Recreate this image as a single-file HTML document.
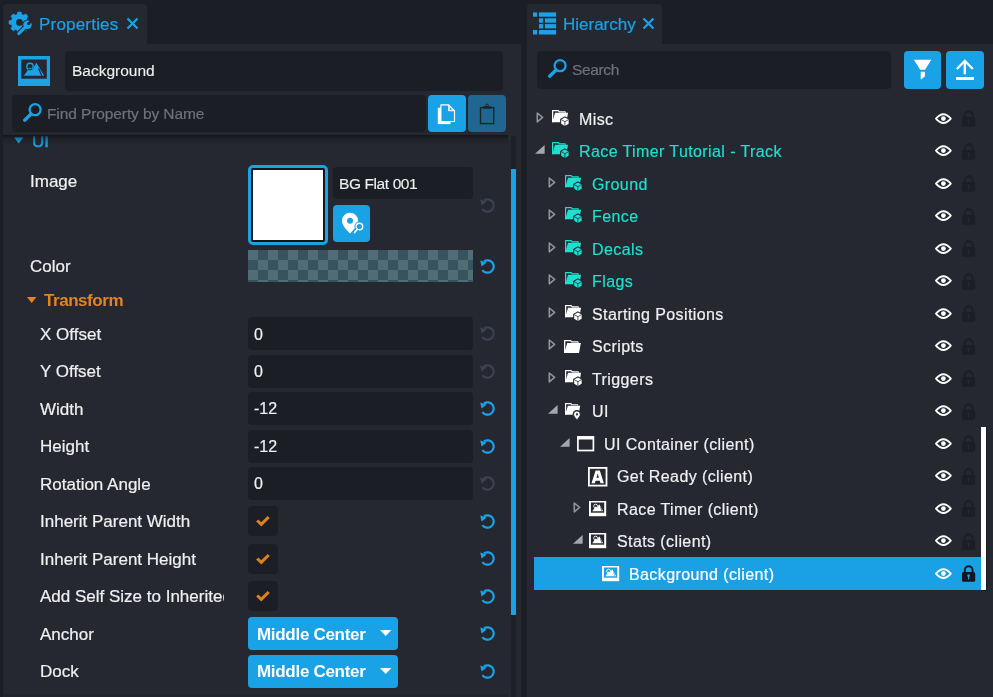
<!DOCTYPE html>
<html><head><meta charset="utf-8">
<style>
*{box-sizing:border-box;margin:0;padding:0}
html,body{width:993px;height:697px;overflow:hidden;background:#1c1e26;font-family:"Liberation Sans",sans-serif;color:#f0f0f0}
.a{position:absolute;display:block;overflow:visible}
.t{position:absolute;white-space:nowrap;will-change:transform}
</style></head><body>
<div class="a" style="left:3px;top:4px;width:144px;height:41px;background:#262831;border-radius:4px 4px 0 0;"></div>
<div class="a" style="left:3px;top:44px;width:518px;height:653px;background:#262831;"></div>
<svg class="a" style="left:0.00px;top:0.00px;" width="40" height="44" viewBox="0 0 40 44"><circle cx="19.45" cy="22.4" r="8.4" fill="#1aa2e6"/><path d="M17.05 14.799999999999999 L17.9 11.999999999999998 H21.0 L21.849999999999998 14.799999999999999 Z" fill="#1aa2e6" stroke="#1aa2e6" stroke-width="0.6" stroke-linejoin="round" transform="rotate(0 19.45 22.4)"/><path d="M17.05 14.799999999999999 L17.9 11.999999999999998 H21.0 L21.849999999999998 14.799999999999999 Z" fill="#1aa2e6" stroke="#1aa2e6" stroke-width="0.6" stroke-linejoin="round" transform="rotate(45 19.45 22.4)"/><path d="M17.05 14.799999999999999 L17.9 11.999999999999998 H21.0 L21.849999999999998 14.799999999999999 Z" fill="#1aa2e6" stroke="#1aa2e6" stroke-width="0.6" stroke-linejoin="round" transform="rotate(90 19.45 22.4)"/><path d="M17.05 14.799999999999999 L17.9 11.999999999999998 H21.0 L21.849999999999998 14.799999999999999 Z" fill="#1aa2e6" stroke="#1aa2e6" stroke-width="0.6" stroke-linejoin="round" transform="rotate(135 19.45 22.4)"/><path d="M17.05 14.799999999999999 L17.9 11.999999999999998 H21.0 L21.849999999999998 14.799999999999999 Z" fill="#1aa2e6" stroke="#1aa2e6" stroke-width="0.6" stroke-linejoin="round" transform="rotate(180 19.45 22.4)"/><path d="M17.05 14.799999999999999 L17.9 11.999999999999998 H21.0 L21.849999999999998 14.799999999999999 Z" fill="#1aa2e6" stroke="#1aa2e6" stroke-width="0.6" stroke-linejoin="round" transform="rotate(225 19.45 22.4)"/><path d="M17.05 14.799999999999999 L17.9 11.999999999999998 H21.0 L21.849999999999998 14.799999999999999 Z" fill="#1aa2e6" stroke="#1aa2e6" stroke-width="0.6" stroke-linejoin="round" transform="rotate(270 19.45 22.4)"/><path d="M17.05 14.799999999999999 L17.9 11.999999999999998 H21.0 L21.849999999999998 14.799999999999999 Z" fill="#1aa2e6" stroke="#1aa2e6" stroke-width="0.6" stroke-linejoin="round" transform="rotate(315 19.45 22.4)"/><circle cx="19.45" cy="22.4" r="3.35" fill="#262831"/><path d="M18.9 33.5 L27.5 24.8" stroke="#262831" stroke-width="5.2" stroke-linecap="round"/><circle cx="27.5" cy="24.8" r="5.3" fill="#262831"/><path d="M18.9 33.5 L27.5 24.8" stroke="#1aa2e6" stroke-width="3.2" stroke-linecap="round"/><circle cx="27.5" cy="24.8" r="4.2" fill="#1aa2e6"/><path d="M29.38 24.68 L27.62 22.92 L31.86 18.67 L33.63 20.44 Z" fill="#262831"/><circle cx="28.5" cy="23.8" r="1.45" fill="#262831"/></svg>
<div class="t" style="left:39.30px;top:14.00px;font-size:17px;line-height:21px;color:#1aa2e6;letter-spacing:0.2px;-webkit-text-stroke:0.2px #1aa2e6;">Properties</div>
<svg class="a" style="left:126.00px;top:17.00px;" width="13" height="13" viewBox="0 0 13 13"><path d="M1.5 1.5L11.5 11.5M11.5 1.5L1.5 11.5" stroke="#1aa2e6" stroke-width="2.2"/></svg>
<svg class="a" style="left:18.00px;top:56.00px;" width="32" height="30" viewBox="0 0 32 30"><defs><clipPath id="mt"><path d="M5.8 19.8 L12 11.3 L14.3 13.8 L18.4 6.8 L26.2 19.8 Z"/></clipPath></defs><rect x="0" y="0" width="32" height="30" fill="#1aa2e6"/><rect x="3.2" y="3.5" width="25.6" height="19.2" fill="#262831"/><circle cx="12" cy="10.4" r="3.2" fill="none" stroke="#1aa2e6" stroke-width="1.4"/><path d="M5.8 19.8 L12 11.3 L14.3 13.8 L18.4 6.8 L26.2 19.8 Z" fill="#1aa2e6"/><circle cx="12" cy="10.4" r="3.2" fill="none" stroke="#262831" stroke-width="1.2" clip-path="url(#mt)"/><path d="M20.6 12.4 L23.9 19.9" stroke="#262831" stroke-width="1.2"/></svg>
<div class="a" style="left:65px;top:51px;width:438px;height:40px;background:#1c1e26;border-radius:4px;"></div>
<div class="t" style="left:72.00px;top:61.00px;font-size:15.5px;line-height:19px;color:#f0f0f0;-webkit-text-stroke:0.12px #f0f0f0;">Background</div>
<div class="a" style="left:12px;top:95px;width:414px;height:37px;background:#1c1e26;border-radius:4px;"></div>
<svg class="a" style="left:20.00px;top:100.00px;" width="25" height="25" viewBox="0 0 25 25"><circle cx="15.1" cy="9.7" r="5.5" fill="none" stroke="#1aa2e6" stroke-width="2.3"/><path d="M10.8 14.2 L4.6 20.2" stroke="#1aa2e6" stroke-width="3.3" stroke-linecap="round"/></svg>
<div class="t" style="left:46.80px;top:104.00px;font-size:15.5px;line-height:19px;color:#6f7279;letter-spacing:-0.1px;-webkit-text-stroke:0.2px #6f7279;">Find Property by Name</div>
<div class="a" style="left:428px;top:95px;width:38px;height:37px;background:#1aa2e6;border-radius:4px;"></div>
<svg class="a" style="left:437.00px;top:103.00px;" width="20" height="22" viewBox="0 0 20 22"><path d="M0.8 4.8 H13.5 V21.1 H0.8 Z" fill="#fff"/><path d="M3.9 1.9 H11.6 L17.5 7.8 V18.5 H3.9 Z" fill="#1aa2e6" stroke="#fff" stroke-width="1.15" stroke-linejoin="round"/><path d="M11.6 1.9 V7.8 H17.5 Z" fill="#fff" stroke="#fff" stroke-width="0.8" stroke-linejoin="round"/><path d="M12.6 4 V6.8 H15.4 Z" fill="#1aa2e6"/></svg>
<div class="a" style="left:468px;top:95px;width:38px;height:37px;background:#1f6790;border-radius:4px;"></div>
<svg class="a" style="left:479.00px;top:103.00px;" width="16" height="22" viewBox="0 0 16 22"><rect x="1.5" y="4.6" width="13.2" height="16.0" fill="none" stroke="#1b232b" stroke-width="1.4"/><rect x="4" y="3.2" width="8.2" height="2.6" rx="1" fill="#1b232b"/><circle cx="8.1" cy="2.4" r="1.3" fill="none" stroke="#1b232b" stroke-width="1"/></svg>
<svg class="a" style="left:14.00px;top:136.50px;" width="10" height="7" viewBox="0 0 10 7"><path d="M0 0.3 H9.4 L4.7 6.5Z" fill="#1aa2e6"/></svg>
<div class="t" style="left:32.30px;top:131.00px;font-size:17px;line-height:21px;color:#1aa2e6;-webkit-text-stroke:0.5px #1aa2e6;clip-path:inset(5px 0 0 0);">UI</div>
<div class="t" style="left:29.80px;top:171.00px;font-size:17px;line-height:21px;color:#f0f0f0;-webkit-text-stroke:0.2px #f0f0f0;">Image</div>
<div class="t" style="left:30.20px;top:256.00px;font-size:17px;line-height:21px;color:#f0f0f0;-webkit-text-stroke:0.2px #f0f0f0;">Color</div>
<svg class="a" style="left:26.50px;top:296.50px;" width="10" height="6.5" viewBox="0 0 10 6.5"><path d="M0 0 H9.4 L4.7 6Z" fill="#e5831e"/></svg>
<div class="t" style="left:44.00px;top:290.00px;font-size:17px;line-height:21px;color:#e5831e;font-weight:bold;letter-spacing:-0.45px;">Transform</div>
<div class="t" style="left:40.10px;top:324.00px;font-size:17px;line-height:21px;color:#f0f0f0;-webkit-text-stroke:0.2px #f0f0f0;">X Offset</div>
<div class="t" style="left:40.10px;top:361.46px;font-size:17px;line-height:21px;color:#f0f0f0;-webkit-text-stroke:0.2px #f0f0f0;">Y Offset</div>
<div class="t" style="left:40.10px;top:398.92px;font-size:17px;line-height:21px;color:#f0f0f0;-webkit-text-stroke:0.2px #f0f0f0;">Width</div>
<div class="t" style="left:40.10px;top:436.38px;font-size:17px;line-height:21px;color:#f0f0f0;-webkit-text-stroke:0.2px #f0f0f0;">Height</div>
<div class="t" style="left:40.10px;top:473.84px;font-size:17px;line-height:21px;color:#f0f0f0;-webkit-text-stroke:0.2px #f0f0f0;">Rotation Angle</div>
<div class="t" style="left:40.10px;top:511.30px;font-size:17px;line-height:21px;color:#f0f0f0;-webkit-text-stroke:0.2px #f0f0f0;">Inherit Parent Width</div>
<div class="t" style="left:40.10px;top:548.76px;font-size:17px;line-height:21px;color:#f0f0f0;-webkit-text-stroke:0.2px #f0f0f0;">Inherit Parent Height</div>
<div class="t" style="left:40.10px;top:586.22px;font-size:17px;line-height:21px;color:#f0f0f0;-webkit-text-stroke:0.2px #f0f0f0;width:184px;overflow:hidden;">Add Self Size to Inherited Size</div>
<div class="t" style="left:40.10px;top:623.68px;font-size:17px;line-height:21px;color:#f0f0f0;-webkit-text-stroke:0.2px #f0f0f0;">Anchor</div>
<div class="t" style="left:40.10px;top:661.14px;font-size:17px;line-height:21px;color:#f0f0f0;-webkit-text-stroke:0.2px #f0f0f0;">Dock</div>
<div class="a" style="left:248px;top:165px;width:80px;height:80px;background:#1aa2e6;border-radius:5px;"></div>
<div class="a" style="left:250.5px;top:167.5px;width:74px;height:74px;background:#15151a;border-radius:2px;"></div>
<div class="a" style="left:252.5px;top:169.5px;width:70px;height:70px;background:#ffffff;"></div>
<div class="a" style="left:333px;top:167px;width:140px;height:32px;background:#1c1e26;border-radius:4px;"></div>
<div class="t" style="left:339.30px;top:174.00px;font-size:15.5px;line-height:19px;color:#f0f0f0;letter-spacing:-0.4px;-webkit-text-stroke:0.12px #f0f0f0;">BG Flat 001</div>
<div class="a" style="left:333px;top:205px;width:37px;height:37px;background:#1aa2e6;border-radius:4px;"></div>
<svg class="a" style="left:340.00px;top:212.00px;" width="25" height="23" viewBox="0 0 25 23"><path d="M10 21.6 C6.2 17.2 2 13.6 2 8.7 A8 8 0 0 1 18 8.7 C18 13.6 13.8 17.2 10 21.6Z" fill="#fff"/><circle cx="10" cy="8.7" r="3" fill="#1aa2e6"/><circle cx="19.4" cy="14.5" r="5" fill="#1aa2e6"/><circle cx="19.4" cy="14.5" r="3.3" fill="none" stroke="#fff" stroke-width="1.4"/><path d="M17.3 17.2 L14.2 21" stroke="#1aa2e6" stroke-width="3.6"/><path d="M17.2 17.2 L14.6 20.6" stroke="#fff" stroke-width="1.7" stroke-linecap="round"/></svg>
<div class="a" style="left:248px;top:250px;width:225px;height:32px;background-color:#506c76;background-image:linear-gradient(45deg,#37535d 25%,transparent 25%,transparent 75%,#37535d 75%),linear-gradient(45deg,#37535d 25%,transparent 25%,transparent 75%,#37535d 75%);background-size:20px 20px;background-position:0 0,10px 10px"></div>
<div class="a" style="left:248px;top:317.0px;width:225px;height:33px;background:#1c1e26;border-radius:4px;"></div>
<div class="t" style="left:254.20px;top:324.50px;font-size:16px;line-height:20px;color:#f0f0f0;-webkit-text-stroke:0.2px #f0f0f0;">0</div>
<div class="a" style="left:248px;top:354.5px;width:225px;height:33px;background:#1c1e26;border-radius:4px;"></div>
<div class="t" style="left:254.20px;top:361.96px;font-size:16px;line-height:20px;color:#f0f0f0;-webkit-text-stroke:0.2px #f0f0f0;">0</div>
<div class="a" style="left:248px;top:392.0px;width:225px;height:33px;background:#1c1e26;border-radius:4px;"></div>
<div class="t" style="left:254.20px;top:399.42px;font-size:16px;line-height:20px;color:#f0f0f0;-webkit-text-stroke:0.2px #f0f0f0;">-12</div>
<div class="a" style="left:248px;top:429.5px;width:225px;height:33px;background:#1c1e26;border-radius:4px;"></div>
<div class="t" style="left:254.20px;top:436.88px;font-size:16px;line-height:20px;color:#f0f0f0;-webkit-text-stroke:0.2px #f0f0f0;">-12</div>
<div class="a" style="left:248px;top:467.0px;width:225px;height:33px;background:#1c1e26;border-radius:4px;"></div>
<div class="t" style="left:254.20px;top:474.34px;font-size:16px;line-height:20px;color:#f0f0f0;-webkit-text-stroke:0.2px #f0f0f0;">0</div>
<div class="a" style="left:248px;top:506.0px;width:30px;height:30px;background:#1c1e26;border-radius:4px;"></div>
<svg class="a" style="left:255.00px;top:514.00px;" width="16" height="14" viewBox="0 0 16 14"><path d="M2.2 6.5 L6.3 10.4 L13.7 3" fill="none" stroke="#da821c" stroke-width="3.1"/></svg>
<div class="a" style="left:248px;top:543.5px;width:30px;height:30px;background:#1c1e26;border-radius:4px;"></div>
<svg class="a" style="left:255.00px;top:551.50px;" width="16" height="14" viewBox="0 0 16 14"><path d="M2.2 6.5 L6.3 10.4 L13.7 3" fill="none" stroke="#da821c" stroke-width="3.1"/></svg>
<div class="a" style="left:248px;top:581.0px;width:30px;height:30px;background:#1c1e26;border-radius:4px;"></div>
<svg class="a" style="left:255.00px;top:589.00px;" width="16" height="14" viewBox="0 0 16 14"><path d="M2.2 6.5 L6.3 10.4 L13.7 3" fill="none" stroke="#da821c" stroke-width="3.1"/></svg>
<div class="a" style="left:248px;top:617.0px;width:150px;height:33px;background:#1aa2e6;border-radius:4px;"></div>
<div class="t" style="left:256.80px;top:624.00px;font-size:17px;line-height:21px;color:#ffffff;font-weight:bold;letter-spacing:-0.3px;">Middle Center</div>
<svg class="a" style="left:379.50px;top:630.20px;" width="12" height="6.5" viewBox="0 0 12 6.5"><path d="M0 0 H11.4 L5.7 6Z" fill="#fff"/></svg>
<div class="a" style="left:248px;top:654.6px;width:150px;height:33px;background:#1aa2e6;border-radius:4px;"></div>
<div class="t" style="left:256.80px;top:661.46px;font-size:17px;line-height:21px;color:#ffffff;font-weight:bold;letter-spacing:-0.3px;">Middle Center</div>
<svg class="a" style="left:379.50px;top:667.80px;" width="12" height="6.5" viewBox="0 0 12 6.5"><path d="M0 0 H11.4 L5.7 6Z" fill="#fff"/></svg>
<svg class="a" style="left:479.70px;top:197.50px;" width="16" height="16" viewBox="0 0 16 16"><path d="M3.94 2.42 A6.2 6.2 0 1 1 2.42 11.06" fill="none" stroke="#3b4252" stroke-width="2.2"/><path d="M0.2 1.6 L1.6 7.6 L6.6 3.4Z" fill="#3b4252"/></svg>
<svg class="a" style="left:479.70px;top:258.50px;" width="16" height="16" viewBox="0 0 16 16"><path d="M3.94 2.42 A6.2 6.2 0 1 1 2.42 11.06" fill="none" stroke="#1aa2e6" stroke-width="2.2"/><path d="M0.2 1.6 L1.6 7.6 L6.6 3.4Z" fill="#1aa2e6"/></svg>
<svg class="a" style="left:479.70px;top:326.00px;" width="16" height="16" viewBox="0 0 16 16"><path d="M3.94 2.42 A6.2 6.2 0 1 1 2.42 11.06" fill="none" stroke="#3b4252" stroke-width="2.2"/><path d="M0.2 1.6 L1.6 7.6 L6.6 3.4Z" fill="#3b4252"/></svg>
<svg class="a" style="left:479.70px;top:363.50px;" width="16" height="16" viewBox="0 0 16 16"><path d="M3.94 2.42 A6.2 6.2 0 1 1 2.42 11.06" fill="none" stroke="#3b4252" stroke-width="2.2"/><path d="M0.2 1.6 L1.6 7.6 L6.6 3.4Z" fill="#3b4252"/></svg>
<svg class="a" style="left:479.70px;top:401.00px;" width="16" height="16" viewBox="0 0 16 16"><path d="M3.94 2.42 A6.2 6.2 0 1 1 2.42 11.06" fill="none" stroke="#1aa2e6" stroke-width="2.2"/><path d="M0.2 1.6 L1.6 7.6 L6.6 3.4Z" fill="#1aa2e6"/></svg>
<svg class="a" style="left:479.70px;top:438.50px;" width="16" height="16" viewBox="0 0 16 16"><path d="M3.94 2.42 A6.2 6.2 0 1 1 2.42 11.06" fill="none" stroke="#1aa2e6" stroke-width="2.2"/><path d="M0.2 1.6 L1.6 7.6 L6.6 3.4Z" fill="#1aa2e6"/></svg>
<svg class="a" style="left:479.70px;top:476.00px;" width="16" height="16" viewBox="0 0 16 16"><path d="M3.94 2.42 A6.2 6.2 0 1 1 2.42 11.06" fill="none" stroke="#3b4252" stroke-width="2.2"/><path d="M0.2 1.6 L1.6 7.6 L6.6 3.4Z" fill="#3b4252"/></svg>
<svg class="a" style="left:479.70px;top:513.50px;" width="16" height="16" viewBox="0 0 16 16"><path d="M3.94 2.42 A6.2 6.2 0 1 1 2.42 11.06" fill="none" stroke="#1aa2e6" stroke-width="2.2"/><path d="M0.2 1.6 L1.6 7.6 L6.6 3.4Z" fill="#1aa2e6"/></svg>
<svg class="a" style="left:479.70px;top:551.00px;" width="16" height="16" viewBox="0 0 16 16"><path d="M3.94 2.42 A6.2 6.2 0 1 1 2.42 11.06" fill="none" stroke="#1aa2e6" stroke-width="2.2"/><path d="M0.2 1.6 L1.6 7.6 L6.6 3.4Z" fill="#1aa2e6"/></svg>
<svg class="a" style="left:479.70px;top:588.50px;" width="16" height="16" viewBox="0 0 16 16"><path d="M3.94 2.42 A6.2 6.2 0 1 1 2.42 11.06" fill="none" stroke="#1aa2e6" stroke-width="2.2"/><path d="M0.2 1.6 L1.6 7.6 L6.6 3.4Z" fill="#1aa2e6"/></svg>
<svg class="a" style="left:479.70px;top:626.00px;" width="16" height="16" viewBox="0 0 16 16"><path d="M3.94 2.42 A6.2 6.2 0 1 1 2.42 11.06" fill="none" stroke="#1aa2e6" stroke-width="2.2"/><path d="M0.2 1.6 L1.6 7.6 L6.6 3.4Z" fill="#1aa2e6"/></svg>
<svg class="a" style="left:479.70px;top:663.50px;" width="16" height="16" viewBox="0 0 16 16"><path d="M3.94 2.42 A6.2 6.2 0 1 1 2.42 11.06" fill="none" stroke="#1aa2e6" stroke-width="2.2"/><path d="M0.2 1.6 L1.6 7.6 L6.6 3.4Z" fill="#1aa2e6"/></svg>
<div class="a" style="left:511px;top:136px;width:5px;height:561px;background:#1e2028;"></div>
<div class="a" style="left:511px;top:169px;width:5px;height:446px;background:#1aa2e6;"></div>
<div class="a" style="left:3px;top:135px;width:505px;height:10px;background:linear-gradient(rgba(16,17,21,0.8),rgba(16,17,21,0.25) 40%,rgba(16,17,21,0))"></div>
<div class="a" style="left:3px;top:694px;width:505px;height:3px;background:#22242b;"></div>
<div class="a" style="left:527px;top:4px;width:135px;height:41px;background:#262831;border-radius:4px 4px 0 0;"></div>
<div class="a" style="left:527px;top:44px;width:466px;height:653px;background:#262831;"></div>
<svg class="a" style="left:533.00px;top:12.00px;" width="24" height="23" viewBox="0 0 24 23"><rect x="0" y="0.4" width="4.1" height="4.3" fill="#1aa2e6"/><rect x="6" y="0.4" width="17.1" height="4.3" fill="#1aa2e6"/><rect x="6" y="6.3" width="4.1" height="4.4" fill="#1aa2e6"/><rect x="11.9" y="6.3" width="11.2" height="4.4" fill="#1aa2e6"/><rect x="6" y="12.1" width="4.1" height="4.3" fill="#1aa2e6"/><rect x="11.9" y="12.1" width="11.2" height="4.3" fill="#1aa2e6"/><rect x="0" y="18" width="4.1" height="4.5" fill="#1aa2e6"/><rect x="6" y="18" width="17.1" height="4.5" fill="#1aa2e6"/></svg>
<div class="t" style="left:563.40px;top:14.00px;font-size:17px;line-height:21px;color:#1aa2e6;-webkit-text-stroke:0.2px #1aa2e6;">Hierarchy</div>
<svg class="a" style="left:642.00px;top:17.00px;" width="13" height="13" viewBox="0 0 13 13"><path d="M1.5 1.5L11.5 11.5M11.5 1.5L1.5 11.5" stroke="#1aa2e6" stroke-width="2.2"/></svg>
<div class="a" style="left:537px;top:51px;width:354px;height:38px;background:#1c1e26;border-radius:4px;"></div>
<svg class="a" style="left:545.40px;top:56.00px;" width="25" height="25" viewBox="0 0 25 25"><circle cx="15.1" cy="9.7" r="5.5" fill="none" stroke="#1aa2e6" stroke-width="2.3"/><path d="M10.8 14.2 L4.6 20.2" stroke="#1aa2e6" stroke-width="3.3" stroke-linecap="round"/></svg>
<div class="t" style="left:571.80px;top:60.00px;font-size:15.5px;line-height:19px;color:#6f7279;letter-spacing:-0.35px;-webkit-text-stroke:0.2px #6f7279;">Search</div>
<div class="a" style="left:904px;top:51px;width:37px;height:38px;background:#1aa2e6;border-radius:4px;"></div>
<svg class="a" style="left:913.00px;top:59.00px;" width="20" height="22" viewBox="0 0 20 22"><path d="M0.8 0.8 H18.3 L12 10.8 H7.2Z" fill="#fff"/><path d="M7.7 12.8 H11.9 V17.5 L7.7 20.5Z" fill="#fff"/></svg>
<div class="a" style="left:946px;top:51px;width:38px;height:38px;background:#1aa2e6;border-radius:4px;"></div>
<svg class="a" style="left:955.00px;top:59.00px;" width="20" height="22" viewBox="0 0 20 22"><path d="M1.8 10 L9.8 2 L17.8 10" fill="none" stroke="#fff" stroke-width="2.3"/><path d="M9.8 2.5 V15.3" stroke="#fff" stroke-width="2.3"/><rect x="1" y="18" width="18" height="3" fill="#fff"/></svg>
<div class="a" style="left:534px;top:557px;width:447px;height:33px;background:#1aa1e5;"></div>
<svg class="a" style="left:535.50px;top:111.55px;" width="9" height="11" viewBox="0 0 9 11"><path d="M1.3 1 L6.6 5.4 L1.3 9.8Z" fill="none" stroke="#909297" stroke-width="1.6" stroke-linejoin="round"/></svg>
<svg class="a" style="left:551.00px;top:108.75px;" width="24" height="22" viewBox="0 0 24 22"><g transform="translate(1 1) scale(0.95)"><path d="M0.65 13 V0.65 H6.6 L7.7 1.95 H14.2" fill="none" stroke="#ffffff" stroke-width="1.3" stroke-linejoin="round"/><path d="M14.2 1.95 V3" fill="none" stroke="#ffffff" stroke-width="0.9"/><path d="M3.2 3 H16.9 L15 13 H0.3 L0.8 11 Z" fill="#ffffff"/></g><polygon points="13.90,7.20 18.66,9.95 18.66,15.45 13.90,18.20 9.14,15.45 9.14,9.95" fill="#262831"/><polygon points="13.90,8.40 17.62,10.55 17.62,14.85 13.90,17.00 10.18,14.85 10.18,10.55" fill="#ffffff"/><path d="M10.18 10.55 L13.90 12.70 L17.62 10.55 M13.90 12.70 V17.00" fill="none" stroke="#262831" stroke-width="0.8"/></svg>
<div class="t" style="left:579.00px;top:110.00px;font-size:16px;line-height:20px;color:#f0f0f0;letter-spacing:0.4px;-webkit-text-stroke:0.2px #f0f0f0;">Misc</div>
<svg class="a" style="left:935.10px;top:112.85px;" width="17" height="12" viewBox="0 0 17 12"><path d="M1 5.6 Q8.4 -3.2 15.8 5.6 Q8.4 14.4 1 5.6Z" fill="none" stroke="#fff" stroke-width="1.9" stroke-linejoin="round"/><circle cx="8.4" cy="5.6" r="2.4" fill="#fff"/></svg>
<svg class="a" style="left:962.00px;top:110.35px;" width="14" height="18" viewBox="0 0 14 18"><path d="M2.8 7.5 V5.2 A3.9 3.9 0 0 1 10.6 5.2 V7.5" fill="none" stroke="#1c1e26" stroke-width="1.9"/><rect x="0" y="7" width="13.2" height="9.8" rx="1.6" fill="#1c1e26"/><circle cx="6.6" cy="10.7" r="1.35" fill="#262831"/><path d="M6.6 11 V14.4" stroke="#262831" stroke-width="1.1"/></svg>
<svg class="a" style="left:535.10px;top:145.35px;" width="10" height="9" viewBox="0 0 10 9"><path d="M9.6 0 V8.8 H0Z" fill="#a4a6aa"/></svg>
<svg class="a" style="left:551.00px;top:141.25px;" width="24" height="22" viewBox="0 0 24 22"><g transform="translate(1 1) scale(0.95)"><path d="M0.65 13 V0.65 H6.6 L7.7 1.95 H14.2" fill="none" stroke="#1fdfce" stroke-width="1.3" stroke-linejoin="round"/><path d="M14.2 1.95 V3" fill="none" stroke="#1fdfce" stroke-width="0.9"/><path d="M3.2 3 H16.9 L15 13 H0.3 L0.8 11 Z" fill="#1fdfce"/></g><polygon points="13.90,7.20 18.66,9.95 18.66,15.45 13.90,18.20 9.14,15.45 9.14,9.95" fill="#262831"/><polygon points="13.90,8.40 17.62,10.55 17.62,14.85 13.90,17.00 10.18,14.85 10.18,10.55" fill="#1fdfce"/><path d="M10.18 10.55 L13.90 12.70 L17.62 10.55 M13.90 12.70 V17.00" fill="none" stroke="#262831" stroke-width="0.8"/></svg>
<div class="t" style="left:579.00px;top:142.00px;font-size:16px;line-height:20px;color:#1fdfce;letter-spacing:0.4px;-webkit-text-stroke:0.2px #1fdfce;">Race Timer Tutorial - Track</div>
<svg class="a" style="left:935.10px;top:145.35px;" width="17" height="12" viewBox="0 0 17 12"><path d="M1 5.6 Q8.4 -3.2 15.8 5.6 Q8.4 14.4 1 5.6Z" fill="none" stroke="#fff" stroke-width="1.9" stroke-linejoin="round"/><circle cx="8.4" cy="5.6" r="2.4" fill="#fff"/></svg>
<svg class="a" style="left:962.00px;top:142.85px;" width="14" height="18" viewBox="0 0 14 18"><path d="M2.8 7.5 V5.2 A3.9 3.9 0 0 1 10.6 5.2 V7.5" fill="none" stroke="#1c1e26" stroke-width="1.9"/><rect x="0" y="7" width="13.2" height="9.8" rx="1.6" fill="#1c1e26"/><circle cx="6.6" cy="10.7" r="1.35" fill="#262831"/><path d="M6.6 11 V14.4" stroke="#262831" stroke-width="1.1"/></svg>
<svg class="a" style="left:548.10px;top:176.55px;" width="9" height="11" viewBox="0 0 9 11"><path d="M1.3 1 L6.6 5.4 L1.3 9.8Z" fill="none" stroke="#909297" stroke-width="1.6" stroke-linejoin="round"/></svg>
<svg class="a" style="left:563.60px;top:173.75px;" width="24" height="22" viewBox="0 0 24 22"><g transform="translate(1 1) scale(0.95)"><path d="M0.65 13 V0.65 H6.6 L7.7 1.95 H14.2" fill="none" stroke="#1fdfce" stroke-width="1.3" stroke-linejoin="round"/><path d="M14.2 1.95 V3" fill="none" stroke="#1fdfce" stroke-width="0.9"/><path d="M3.2 3 H16.9 L15 13 H0.3 L0.8 11 Z" fill="#1fdfce"/></g><polygon points="13.90,7.20 18.66,9.95 18.66,15.45 13.90,18.20 9.14,15.45 9.14,9.95" fill="#262831"/><polygon points="13.90,8.40 17.62,10.55 17.62,14.85 13.90,17.00 10.18,14.85 10.18,10.55" fill="#1fdfce"/><path d="M10.18 10.55 L13.90 12.70 L17.62 10.55 M13.90 12.70 V17.00" fill="none" stroke="#262831" stroke-width="0.8"/></svg>
<div class="t" style="left:591.60px;top:175.00px;font-size:16px;line-height:20px;color:#1fdfce;letter-spacing:0.4px;-webkit-text-stroke:0.2px #1fdfce;">Ground</div>
<svg class="a" style="left:935.10px;top:177.85px;" width="17" height="12" viewBox="0 0 17 12"><path d="M1 5.6 Q8.4 -3.2 15.8 5.6 Q8.4 14.4 1 5.6Z" fill="none" stroke="#fff" stroke-width="1.9" stroke-linejoin="round"/><circle cx="8.4" cy="5.6" r="2.4" fill="#fff"/></svg>
<svg class="a" style="left:962.00px;top:175.35px;" width="14" height="18" viewBox="0 0 14 18"><path d="M2.8 7.5 V5.2 A3.9 3.9 0 0 1 10.6 5.2 V7.5" fill="none" stroke="#1c1e26" stroke-width="1.9"/><rect x="0" y="7" width="13.2" height="9.8" rx="1.6" fill="#1c1e26"/><circle cx="6.6" cy="10.7" r="1.35" fill="#262831"/><path d="M6.6 11 V14.4" stroke="#262831" stroke-width="1.1"/></svg>
<svg class="a" style="left:548.10px;top:209.05px;" width="9" height="11" viewBox="0 0 9 11"><path d="M1.3 1 L6.6 5.4 L1.3 9.8Z" fill="none" stroke="#909297" stroke-width="1.6" stroke-linejoin="round"/></svg>
<svg class="a" style="left:563.60px;top:206.25px;" width="24" height="22" viewBox="0 0 24 22"><g transform="translate(1 1) scale(0.95)"><path d="M0.65 13 V0.65 H6.6 L7.7 1.95 H14.2" fill="none" stroke="#1fdfce" stroke-width="1.3" stroke-linejoin="round"/><path d="M14.2 1.95 V3" fill="none" stroke="#1fdfce" stroke-width="0.9"/><path d="M3.2 3 H16.9 L15 13 H0.3 L0.8 11 Z" fill="#1fdfce"/></g><polygon points="13.90,7.20 18.66,9.95 18.66,15.45 13.90,18.20 9.14,15.45 9.14,9.95" fill="#262831"/><polygon points="13.90,8.40 17.62,10.55 17.62,14.85 13.90,17.00 10.18,14.85 10.18,10.55" fill="#1fdfce"/><path d="M10.18 10.55 L13.90 12.70 L17.62 10.55 M13.90 12.70 V17.00" fill="none" stroke="#262831" stroke-width="0.8"/></svg>
<div class="t" style="left:591.60px;top:207.00px;font-size:16px;line-height:20px;color:#1fdfce;letter-spacing:0.4px;-webkit-text-stroke:0.2px #1fdfce;">Fence</div>
<svg class="a" style="left:935.10px;top:210.35px;" width="17" height="12" viewBox="0 0 17 12"><path d="M1 5.6 Q8.4 -3.2 15.8 5.6 Q8.4 14.4 1 5.6Z" fill="none" stroke="#fff" stroke-width="1.9" stroke-linejoin="round"/><circle cx="8.4" cy="5.6" r="2.4" fill="#fff"/></svg>
<svg class="a" style="left:962.00px;top:207.85px;" width="14" height="18" viewBox="0 0 14 18"><path d="M2.8 7.5 V5.2 A3.9 3.9 0 0 1 10.6 5.2 V7.5" fill="none" stroke="#1c1e26" stroke-width="1.9"/><rect x="0" y="7" width="13.2" height="9.8" rx="1.6" fill="#1c1e26"/><circle cx="6.6" cy="10.7" r="1.35" fill="#262831"/><path d="M6.6 11 V14.4" stroke="#262831" stroke-width="1.1"/></svg>
<svg class="a" style="left:548.10px;top:241.55px;" width="9" height="11" viewBox="0 0 9 11"><path d="M1.3 1 L6.6 5.4 L1.3 9.8Z" fill="none" stroke="#909297" stroke-width="1.6" stroke-linejoin="round"/></svg>
<svg class="a" style="left:563.60px;top:238.75px;" width="24" height="22" viewBox="0 0 24 22"><g transform="translate(1 1) scale(0.95)"><path d="M0.65 13 V0.65 H6.6 L7.7 1.95 H14.2" fill="none" stroke="#1fdfce" stroke-width="1.3" stroke-linejoin="round"/><path d="M14.2 1.95 V3" fill="none" stroke="#1fdfce" stroke-width="0.9"/><path d="M3.2 3 H16.9 L15 13 H0.3 L0.8 11 Z" fill="#1fdfce"/></g><polygon points="13.90,7.20 18.66,9.95 18.66,15.45 13.90,18.20 9.14,15.45 9.14,9.95" fill="#262831"/><polygon points="13.90,8.40 17.62,10.55 17.62,14.85 13.90,17.00 10.18,14.85 10.18,10.55" fill="#1fdfce"/><path d="M10.18 10.55 L13.90 12.70 L17.62 10.55 M13.90 12.70 V17.00" fill="none" stroke="#262831" stroke-width="0.8"/></svg>
<div class="t" style="left:591.60px;top:240.00px;font-size:16px;line-height:20px;color:#1fdfce;letter-spacing:0.4px;-webkit-text-stroke:0.2px #1fdfce;">Decals</div>
<svg class="a" style="left:935.10px;top:242.85px;" width="17" height="12" viewBox="0 0 17 12"><path d="M1 5.6 Q8.4 -3.2 15.8 5.6 Q8.4 14.4 1 5.6Z" fill="none" stroke="#fff" stroke-width="1.9" stroke-linejoin="round"/><circle cx="8.4" cy="5.6" r="2.4" fill="#fff"/></svg>
<svg class="a" style="left:962.00px;top:240.35px;" width="14" height="18" viewBox="0 0 14 18"><path d="M2.8 7.5 V5.2 A3.9 3.9 0 0 1 10.6 5.2 V7.5" fill="none" stroke="#1c1e26" stroke-width="1.9"/><rect x="0" y="7" width="13.2" height="9.8" rx="1.6" fill="#1c1e26"/><circle cx="6.6" cy="10.7" r="1.35" fill="#262831"/><path d="M6.6 11 V14.4" stroke="#262831" stroke-width="1.1"/></svg>
<svg class="a" style="left:548.10px;top:274.05px;" width="9" height="11" viewBox="0 0 9 11"><path d="M1.3 1 L6.6 5.4 L1.3 9.8Z" fill="none" stroke="#909297" stroke-width="1.6" stroke-linejoin="round"/></svg>
<svg class="a" style="left:563.60px;top:271.25px;" width="24" height="22" viewBox="0 0 24 22"><g transform="translate(1 1) scale(0.95)"><path d="M0.65 13 V0.65 H6.6 L7.7 1.95 H14.2" fill="none" stroke="#1fdfce" stroke-width="1.3" stroke-linejoin="round"/><path d="M14.2 1.95 V3" fill="none" stroke="#1fdfce" stroke-width="0.9"/><path d="M3.2 3 H16.9 L15 13 H0.3 L0.8 11 Z" fill="#1fdfce"/></g><polygon points="13.90,7.20 18.66,9.95 18.66,15.45 13.90,18.20 9.14,15.45 9.14,9.95" fill="#262831"/><polygon points="13.90,8.40 17.62,10.55 17.62,14.85 13.90,17.00 10.18,14.85 10.18,10.55" fill="#1fdfce"/><path d="M10.18 10.55 L13.90 12.70 L17.62 10.55 M13.90 12.70 V17.00" fill="none" stroke="#262831" stroke-width="0.8"/></svg>
<div class="t" style="left:591.60px;top:272.00px;font-size:16px;line-height:20px;color:#1fdfce;letter-spacing:0.4px;-webkit-text-stroke:0.2px #1fdfce;">Flags</div>
<svg class="a" style="left:935.10px;top:275.35px;" width="17" height="12" viewBox="0 0 17 12"><path d="M1 5.6 Q8.4 -3.2 15.8 5.6 Q8.4 14.4 1 5.6Z" fill="none" stroke="#fff" stroke-width="1.9" stroke-linejoin="round"/><circle cx="8.4" cy="5.6" r="2.4" fill="#fff"/></svg>
<svg class="a" style="left:962.00px;top:272.85px;" width="14" height="18" viewBox="0 0 14 18"><path d="M2.8 7.5 V5.2 A3.9 3.9 0 0 1 10.6 5.2 V7.5" fill="none" stroke="#1c1e26" stroke-width="1.9"/><rect x="0" y="7" width="13.2" height="9.8" rx="1.6" fill="#1c1e26"/><circle cx="6.6" cy="10.7" r="1.35" fill="#262831"/><path d="M6.6 11 V14.4" stroke="#262831" stroke-width="1.1"/></svg>
<svg class="a" style="left:548.10px;top:306.55px;" width="9" height="11" viewBox="0 0 9 11"><path d="M1.3 1 L6.6 5.4 L1.3 9.8Z" fill="none" stroke="#909297" stroke-width="1.6" stroke-linejoin="round"/></svg>
<svg class="a" style="left:563.60px;top:303.75px;" width="24" height="22" viewBox="0 0 24 22"><g transform="translate(1 1) scale(0.95)"><path d="M0.65 13 V0.65 H6.6 L7.7 1.95 H14.2" fill="none" stroke="#ffffff" stroke-width="1.3" stroke-linejoin="round"/><path d="M14.2 1.95 V3" fill="none" stroke="#ffffff" stroke-width="0.9"/><path d="M3.2 3 H16.9 L15 13 H0.3 L0.8 11 Z" fill="#ffffff"/></g><polygon points="13.90,7.20 18.66,9.95 18.66,15.45 13.90,18.20 9.14,15.45 9.14,9.95" fill="#262831"/><polygon points="13.90,8.40 17.62,10.55 17.62,14.85 13.90,17.00 10.18,14.85 10.18,10.55" fill="#ffffff"/><path d="M10.18 10.55 L13.90 12.70 L17.62 10.55 M13.90 12.70 V17.00" fill="none" stroke="#262831" stroke-width="0.8"/></svg>
<div class="t" style="left:591.60px;top:305.00px;font-size:16px;line-height:20px;color:#f0f0f0;letter-spacing:0.4px;-webkit-text-stroke:0.2px #f0f0f0;">Starting Positions</div>
<svg class="a" style="left:935.10px;top:307.85px;" width="17" height="12" viewBox="0 0 17 12"><path d="M1 5.6 Q8.4 -3.2 15.8 5.6 Q8.4 14.4 1 5.6Z" fill="none" stroke="#fff" stroke-width="1.9" stroke-linejoin="round"/><circle cx="8.4" cy="5.6" r="2.4" fill="#fff"/></svg>
<svg class="a" style="left:962.00px;top:305.35px;" width="14" height="18" viewBox="0 0 14 18"><path d="M2.8 7.5 V5.2 A3.9 3.9 0 0 1 10.6 5.2 V7.5" fill="none" stroke="#1c1e26" stroke-width="1.9"/><rect x="0" y="7" width="13.2" height="9.8" rx="1.6" fill="#1c1e26"/><circle cx="6.6" cy="10.7" r="1.35" fill="#262831"/><path d="M6.6 11 V14.4" stroke="#262831" stroke-width="1.1"/></svg>
<svg class="a" style="left:548.10px;top:339.05px;" width="9" height="11" viewBox="0 0 9 11"><path d="M1.3 1 L6.6 5.4 L1.3 9.8Z" fill="none" stroke="#909297" stroke-width="1.6" stroke-linejoin="round"/></svg>
<svg class="a" style="left:563.00px;top:338.85px;" width="24" height="22" viewBox="0 0 24 22"><g transform="translate(1 1)"><path d="M0.65 13 V0.65 H6.6 L7.7 1.95 H14.2" fill="none" stroke="#ffffff" stroke-width="1.3" stroke-linejoin="round"/><path d="M14.2 1.95 V3" fill="none" stroke="#ffffff" stroke-width="0.9"/><path d="M3.2 3 H16.9 L15 13 H0.3 L0.8 11 Z" fill="#ffffff"/></g></svg>
<div class="t" style="left:591.60px;top:337.00px;font-size:16px;line-height:20px;color:#f0f0f0;letter-spacing:0.4px;-webkit-text-stroke:0.2px #f0f0f0;">Scripts</div>
<svg class="a" style="left:935.10px;top:340.35px;" width="17" height="12" viewBox="0 0 17 12"><path d="M1 5.6 Q8.4 -3.2 15.8 5.6 Q8.4 14.4 1 5.6Z" fill="none" stroke="#fff" stroke-width="1.9" stroke-linejoin="round"/><circle cx="8.4" cy="5.6" r="2.4" fill="#fff"/></svg>
<svg class="a" style="left:962.00px;top:337.85px;" width="14" height="18" viewBox="0 0 14 18"><path d="M2.8 7.5 V5.2 A3.9 3.9 0 0 1 10.6 5.2 V7.5" fill="none" stroke="#1c1e26" stroke-width="1.9"/><rect x="0" y="7" width="13.2" height="9.8" rx="1.6" fill="#1c1e26"/><circle cx="6.6" cy="10.7" r="1.35" fill="#262831"/><path d="M6.6 11 V14.4" stroke="#262831" stroke-width="1.1"/></svg>
<svg class="a" style="left:548.10px;top:371.55px;" width="9" height="11" viewBox="0 0 9 11"><path d="M1.3 1 L6.6 5.4 L1.3 9.8Z" fill="none" stroke="#909297" stroke-width="1.6" stroke-linejoin="round"/></svg>
<svg class="a" style="left:563.60px;top:368.75px;" width="24" height="22" viewBox="0 0 24 22"><g transform="translate(1 1) scale(0.95)"><path d="M0.65 13 V0.65 H6.6 L7.7 1.95 H14.2" fill="none" stroke="#ffffff" stroke-width="1.3" stroke-linejoin="round"/><path d="M14.2 1.95 V3" fill="none" stroke="#ffffff" stroke-width="0.9"/><path d="M3.2 3 H16.9 L15 13 H0.3 L0.8 11 Z" fill="#ffffff"/></g><polygon points="13.90,7.20 18.66,9.95 18.66,15.45 13.90,18.20 9.14,15.45 9.14,9.95" fill="#262831"/><polygon points="13.90,8.40 17.62,10.55 17.62,14.85 13.90,17.00 10.18,14.85 10.18,10.55" fill="#ffffff"/><path d="M10.18 10.55 L13.90 12.70 L17.62 10.55 M13.90 12.70 V17.00" fill="none" stroke="#262831" stroke-width="0.8"/></svg>
<div class="t" style="left:591.60px;top:370.00px;font-size:16px;line-height:20px;color:#f0f0f0;letter-spacing:0.4px;-webkit-text-stroke:0.2px #f0f0f0;">Triggers</div>
<svg class="a" style="left:935.10px;top:372.85px;" width="17" height="12" viewBox="0 0 17 12"><path d="M1 5.6 Q8.4 -3.2 15.8 5.6 Q8.4 14.4 1 5.6Z" fill="none" stroke="#fff" stroke-width="1.9" stroke-linejoin="round"/><circle cx="8.4" cy="5.6" r="2.4" fill="#fff"/></svg>
<svg class="a" style="left:962.00px;top:370.35px;" width="14" height="18" viewBox="0 0 14 18"><path d="M2.8 7.5 V5.2 A3.9 3.9 0 0 1 10.6 5.2 V7.5" fill="none" stroke="#1c1e26" stroke-width="1.9"/><rect x="0" y="7" width="13.2" height="9.8" rx="1.6" fill="#1c1e26"/><circle cx="6.6" cy="10.7" r="1.35" fill="#262831"/><path d="M6.6 11 V14.4" stroke="#262831" stroke-width="1.1"/></svg>
<svg class="a" style="left:547.70px;top:405.35px;" width="10" height="9" viewBox="0 0 10 9"><path d="M9.6 0 V8.8 H0Z" fill="#a4a6aa"/></svg>
<svg class="a" style="left:564.00px;top:401.75px;" width="24" height="22" viewBox="0 0 24 22"><g transform="translate(1 1) scale(0.9)"><path d="M0.65 13 V0.65 H6.6 L7.7 1.95 H14.2" fill="none" stroke="#ffffff" stroke-width="1.3" stroke-linejoin="round"/><path d="M14.2 1.95 V3" fill="none" stroke="#ffffff" stroke-width="0.9"/><path d="M3.2 3 H16.9 L15 13 H0.3 L0.8 11 Z" fill="#ffffff"/></g><circle cx="12.9" cy="12.4" r="4.3" fill="#262831"/><path d="M12.9 17.9 C11 15.6 9.6 14.3 9.6 12.3 A3.3 3.3 0 0 1 16.2 12.3 C16.2 14.3 14.8 15.6 12.9 17.9Z" fill="#ffffff" stroke="#262831" stroke-width="0.8"/><circle cx="12.9" cy="12.4" r="1.1" fill="#262831"/></svg>
<div class="t" style="left:591.60px;top:402.00px;font-size:16px;line-height:20px;color:#f0f0f0;letter-spacing:0.4px;-webkit-text-stroke:0.2px #f0f0f0;">UI</div>
<svg class="a" style="left:935.10px;top:405.35px;" width="17" height="12" viewBox="0 0 17 12"><path d="M1 5.6 Q8.4 -3.2 15.8 5.6 Q8.4 14.4 1 5.6Z" fill="none" stroke="#fff" stroke-width="1.9" stroke-linejoin="round"/><circle cx="8.4" cy="5.6" r="2.4" fill="#fff"/></svg>
<svg class="a" style="left:962.00px;top:402.85px;" width="14" height="18" viewBox="0 0 14 18"><path d="M2.8 7.5 V5.2 A3.9 3.9 0 0 1 10.6 5.2 V7.5" fill="none" stroke="#1c1e26" stroke-width="1.9"/><rect x="0" y="7" width="13.2" height="9.8" rx="1.6" fill="#1c1e26"/><circle cx="6.6" cy="10.7" r="1.35" fill="#262831"/><path d="M6.6 11 V14.4" stroke="#262831" stroke-width="1.1"/></svg>
<svg class="a" style="left:560.30px;top:437.85px;" width="10" height="9" viewBox="0 0 10 9"><path d="M9.6 0 V8.8 H0Z" fill="#a4a6aa"/></svg>
<svg class="a" style="left:576.70px;top:435.75px;" width="20" height="18" viewBox="0 0 20 18"><rect x="0.9" y="0.9" width="15.5" height="13.6" fill="none" stroke="#fff" stroke-width="1.7"/><path d="M0.5 2.2 H16.8" stroke="#fff" stroke-width="2.6"/></svg>
<div class="t" style="left:604.20px;top:435.00px;font-size:16px;line-height:20px;color:#f0f0f0;letter-spacing:0.4px;-webkit-text-stroke:0.2px #f0f0f0;">UI Container (client)</div>
<svg class="a" style="left:935.10px;top:437.85px;" width="17" height="12" viewBox="0 0 17 12"><path d="M1 5.6 Q8.4 -3.2 15.8 5.6 Q8.4 14.4 1 5.6Z" fill="none" stroke="#fff" stroke-width="1.9" stroke-linejoin="round"/><circle cx="8.4" cy="5.6" r="2.4" fill="#fff"/></svg>
<svg class="a" style="left:962.00px;top:435.35px;" width="14" height="18" viewBox="0 0 14 18"><path d="M2.8 7.5 V5.2 A3.9 3.9 0 0 1 10.6 5.2 V7.5" fill="none" stroke="#1c1e26" stroke-width="1.9"/><rect x="0" y="7" width="13.2" height="9.8" rx="1.6" fill="#1c1e26"/><circle cx="6.6" cy="10.7" r="1.35" fill="#262831"/><path d="M6.6 11 V14.4" stroke="#262831" stroke-width="1.1"/></svg>
<svg class="a" style="left:587.80px;top:466.55px;" width="20" height="20" viewBox="0 0 20 20"><rect x="0.9" y="0.9" width="17.6" height="17.7" fill="none" stroke="#fff" stroke-width="1.8"/><path d="M3.5 16.2 L7.6 3.6 H11.8 L15.9 16.2 H12.5 L11.8 13.7 H7.6 L6.9 16.2Z M8.5 10.8 H10.9 L9.7 6.6Z" fill="#fff"/></svg>
<div class="t" style="left:616.80px;top:467.00px;font-size:16px;line-height:20px;color:#f0f0f0;letter-spacing:0.4px;-webkit-text-stroke:0.2px #f0f0f0;">Get Ready (client)</div>
<svg class="a" style="left:935.10px;top:470.35px;" width="17" height="12" viewBox="0 0 17 12"><path d="M1 5.6 Q8.4 -3.2 15.8 5.6 Q8.4 14.4 1 5.6Z" fill="none" stroke="#fff" stroke-width="1.9" stroke-linejoin="round"/><circle cx="8.4" cy="5.6" r="2.4" fill="#fff"/></svg>
<svg class="a" style="left:962.00px;top:467.85px;" width="14" height="18" viewBox="0 0 14 18"><path d="M2.8 7.5 V5.2 A3.9 3.9 0 0 1 10.6 5.2 V7.5" fill="none" stroke="#1c1e26" stroke-width="1.9"/><rect x="0" y="7" width="13.2" height="9.8" rx="1.6" fill="#1c1e26"/><circle cx="6.6" cy="10.7" r="1.35" fill="#262831"/><path d="M6.6 11 V14.4" stroke="#262831" stroke-width="1.1"/></svg>
<svg class="a" style="left:573.30px;top:501.55px;" width="9" height="11" viewBox="0 0 9 11"><path d="M1.3 1 L6.6 5.4 L1.3 9.8Z" fill="none" stroke="#909297" stroke-width="1.6" stroke-linejoin="round"/></svg>
<svg class="a" style="left:589.10px;top:500.75px;" width="18" height="16" viewBox="0 0 18 16"><rect x="0" y="0" width="17.2" height="15.2" fill="#fff"/><rect x="1.9" y="1.5" width="13.3" height="10.2" fill="#262831"/><path d="M3.3 10.3 L6.6 5.6 L7.9 7 L10.2 3.3 L14.3 10.3Z" fill="#fff"/><circle cx="6.6" cy="5.1" r="1.9" fill="none" stroke="#fff" stroke-width="0.9"/><path d="M11.5 6.3 L13.2 10.4" stroke="#262831" stroke-width="0.7"/></svg>
<div class="t" style="left:616.80px;top:500.00px;font-size:16px;line-height:20px;color:#f0f0f0;letter-spacing:0.4px;-webkit-text-stroke:0.2px #f0f0f0;">Race Timer (client)</div>
<svg class="a" style="left:935.10px;top:502.85px;" width="17" height="12" viewBox="0 0 17 12"><path d="M1 5.6 Q8.4 -3.2 15.8 5.6 Q8.4 14.4 1 5.6Z" fill="none" stroke="#fff" stroke-width="1.9" stroke-linejoin="round"/><circle cx="8.4" cy="5.6" r="2.4" fill="#fff"/></svg>
<svg class="a" style="left:962.00px;top:500.35px;" width="14" height="18" viewBox="0 0 14 18"><path d="M2.8 7.5 V5.2 A3.9 3.9 0 0 1 10.6 5.2 V7.5" fill="none" stroke="#1c1e26" stroke-width="1.9"/><rect x="0" y="7" width="13.2" height="9.8" rx="1.6" fill="#1c1e26"/><circle cx="6.6" cy="10.7" r="1.35" fill="#262831"/><path d="M6.6 11 V14.4" stroke="#262831" stroke-width="1.1"/></svg>
<svg class="a" style="left:572.90px;top:535.35px;" width="10" height="9" viewBox="0 0 10 9"><path d="M9.6 0 V8.8 H0Z" fill="#a4a6aa"/></svg>
<svg class="a" style="left:589.10px;top:533.25px;" width="18" height="16" viewBox="0 0 18 16"><rect x="0" y="0" width="17.2" height="15.2" fill="#fff"/><rect x="1.9" y="1.5" width="13.3" height="10.2" fill="#262831"/><path d="M3.3 10.3 L6.6 5.6 L7.9 7 L10.2 3.3 L14.3 10.3Z" fill="#fff"/><circle cx="6.6" cy="5.1" r="1.9" fill="none" stroke="#fff" stroke-width="0.9"/><path d="M11.5 6.3 L13.2 10.4" stroke="#262831" stroke-width="0.7"/></svg>
<div class="t" style="left:616.80px;top:532.00px;font-size:16px;line-height:20px;color:#f0f0f0;letter-spacing:0.4px;-webkit-text-stroke:0.2px #f0f0f0;">Stats (client)</div>
<svg class="a" style="left:935.10px;top:535.35px;" width="17" height="12" viewBox="0 0 17 12"><path d="M1 5.6 Q8.4 -3.2 15.8 5.6 Q8.4 14.4 1 5.6Z" fill="none" stroke="#fff" stroke-width="1.9" stroke-linejoin="round"/><circle cx="8.4" cy="5.6" r="2.4" fill="#fff"/></svg>
<svg class="a" style="left:962.00px;top:532.85px;" width="14" height="18" viewBox="0 0 14 18"><path d="M2.8 7.5 V5.2 A3.9 3.9 0 0 1 10.6 5.2 V7.5" fill="none" stroke="#1c1e26" stroke-width="1.9"/><rect x="0" y="7" width="13.2" height="9.8" rx="1.6" fill="#1c1e26"/><circle cx="6.6" cy="10.7" r="1.35" fill="#262831"/><path d="M6.6 11 V14.4" stroke="#262831" stroke-width="1.1"/></svg>
<svg class="a" style="left:601.70px;top:565.75px;" width="18" height="16" viewBox="0 0 18 16"><rect x="0" y="0" width="17.2" height="15.2" fill="#fff"/><rect x="1.9" y="1.5" width="13.3" height="10.2" fill="#1aa1e5"/><path d="M3.3 10.3 L6.6 5.6 L7.9 7 L10.2 3.3 L14.3 10.3Z" fill="#fff"/><circle cx="6.6" cy="5.1" r="1.9" fill="none" stroke="#fff" stroke-width="0.9"/><path d="M11.5 6.3 L13.2 10.4" stroke="#1aa1e5" stroke-width="0.7"/></svg>
<div class="t" style="left:629.40px;top:565.00px;font-size:16px;line-height:20px;color:#ffffff;letter-spacing:0.4px;-webkit-text-stroke:0.2px #ffffff;">Background (client)</div>
<svg class="a" style="left:935.10px;top:567.85px;" width="17" height="12" viewBox="0 0 17 12"><path d="M1 5.6 Q8.4 -3.2 15.8 5.6 Q8.4 14.4 1 5.6Z" fill="none" stroke="#fff" stroke-width="1.9" stroke-linejoin="round"/><circle cx="8.4" cy="5.6" r="2.4" fill="#fff"/></svg>
<svg class="a" style="left:962.00px;top:565.35px;" width="14" height="18" viewBox="0 0 14 18"><path d="M2.8 7.5 V5.2 A3.9 3.9 0 0 1 10.6 5.2 V7.5" fill="none" stroke="#14161b" stroke-width="1.9"/><rect x="0" y="7" width="13.2" height="9.8" rx="1.6" fill="#14161b"/><circle cx="6.6" cy="10.7" r="1.35" fill="#1aa1e5"/><path d="M6.6 11 V14.4" stroke="#1aa1e5" stroke-width="1.1"/></svg>
<div class="a" style="left:980.5px;top:426.5px;width:6px;height:164px;background:#1a1c22;"></div>
<div class="a" style="left:981px;top:427px;width:5px;height:163px;background:#ffffff;"></div>

</body></html>
